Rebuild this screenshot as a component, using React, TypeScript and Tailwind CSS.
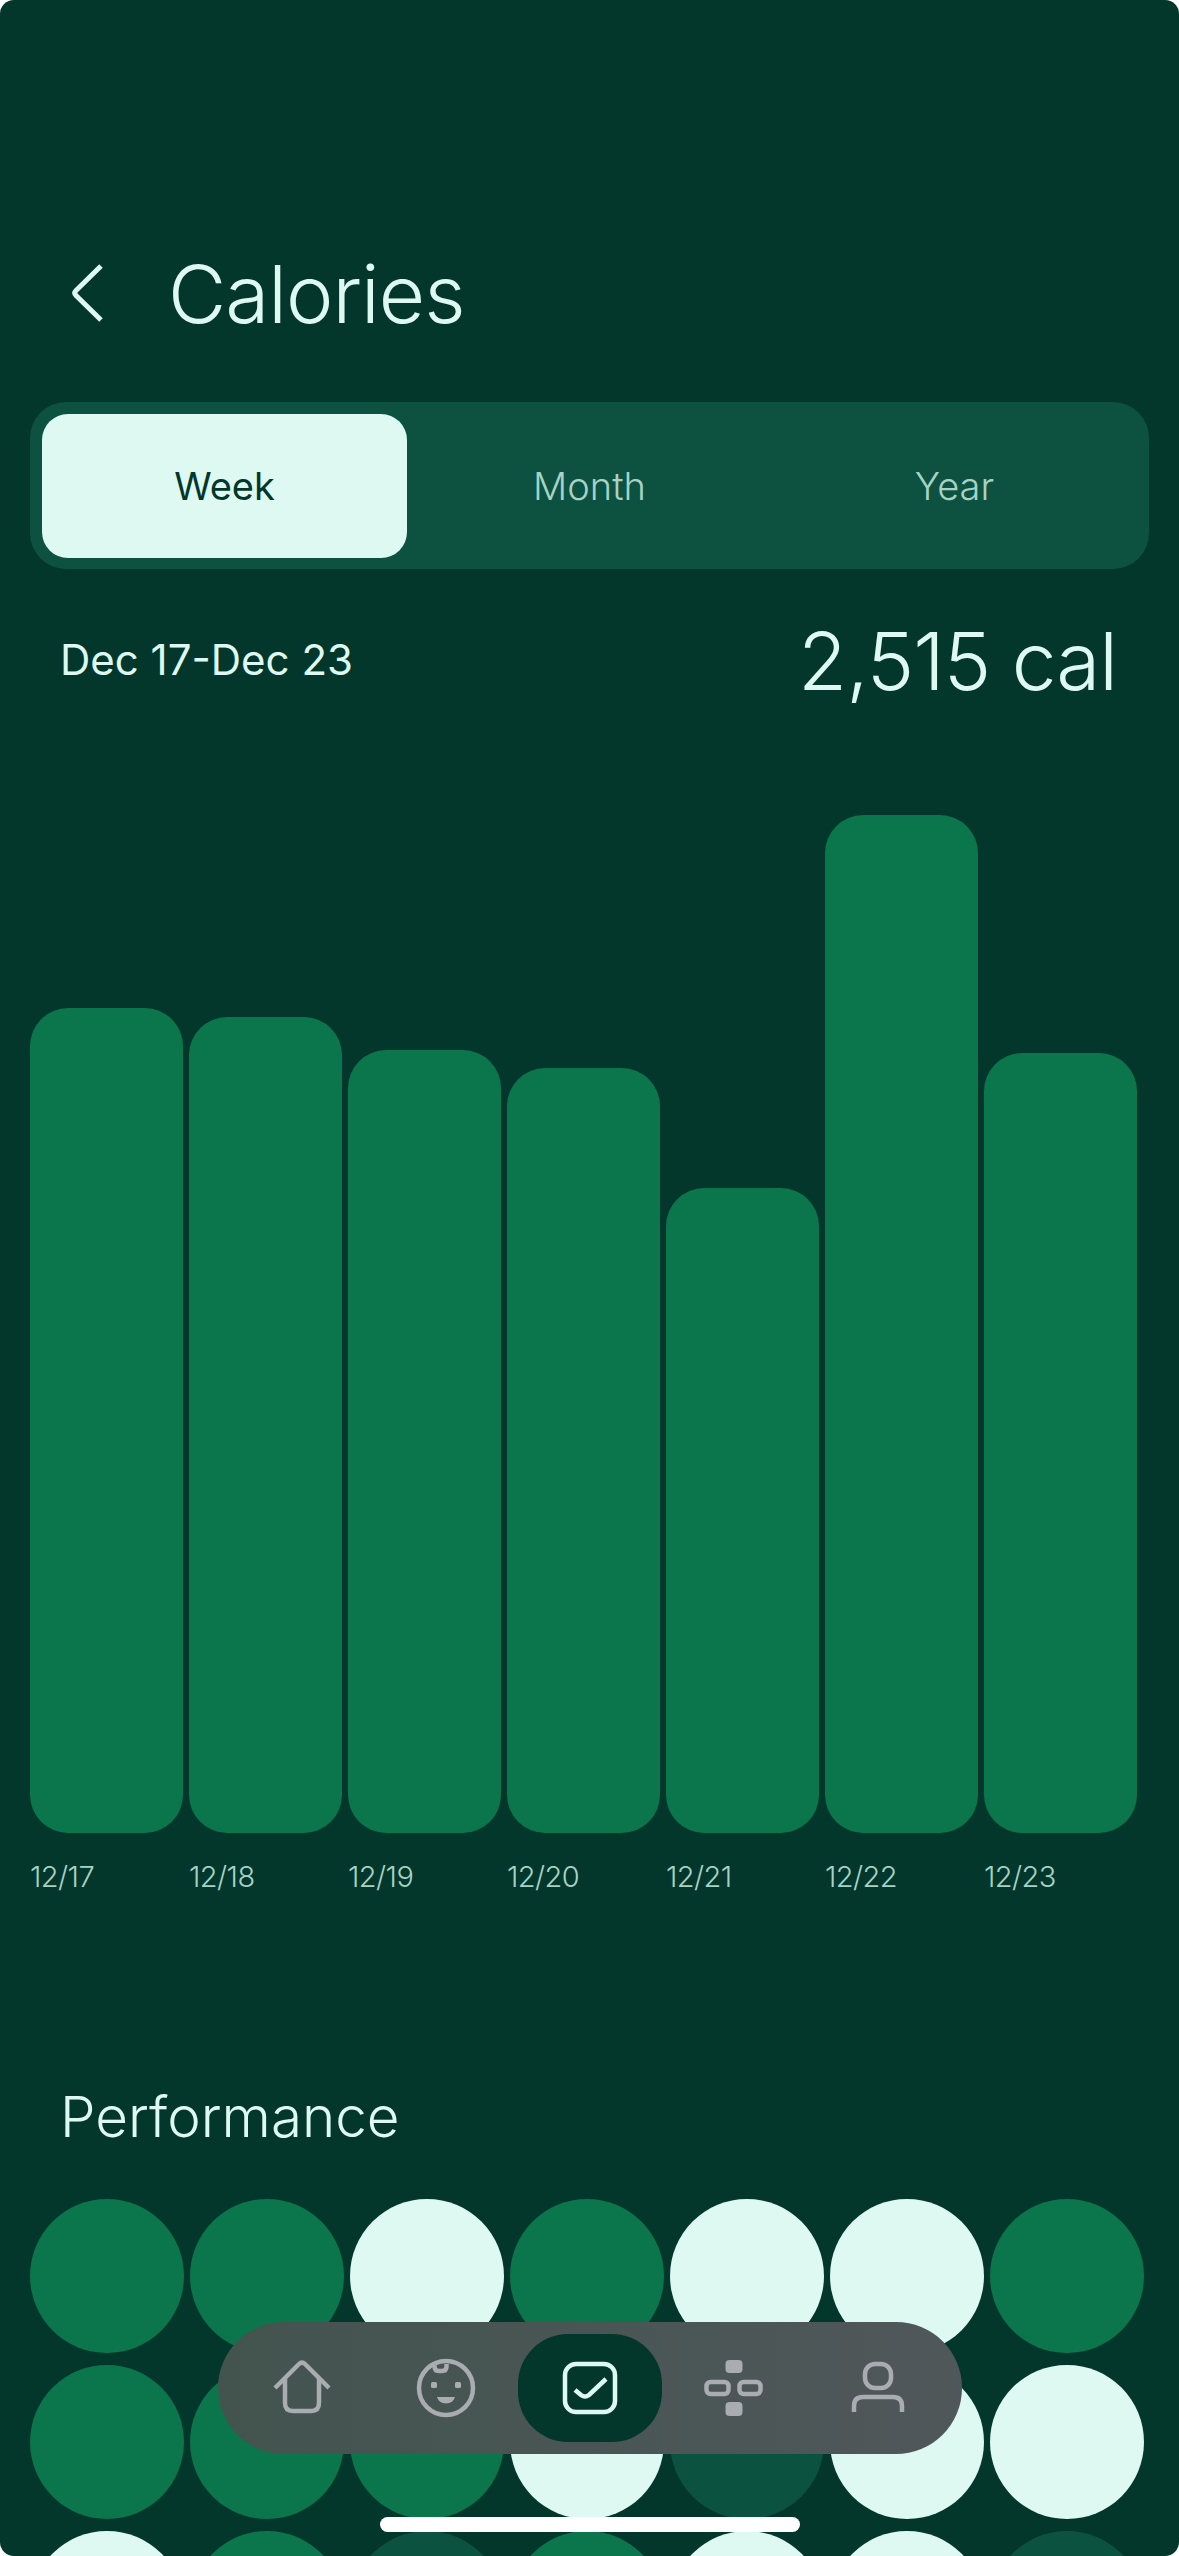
const bars = [
  { day: '12/17', top: 1008 },
  { day: '12/18', top: 1017 },
  { day: '12/19', top: 1050 },
  { day: '12/20', top: 1068 },
  { day: '12/21', top: 1188 },
  { day: '12/22', top: 815 },
  { day: '12/23', top: 1053 },
]

const CHART_BOTTOM = 1833

// 0 = mid green, 1 = pale, 2 = dark green
const dots = [
  0, 0, 1, 0, 1, 1, 0,
  0, 0, 0, 1, 2, 1, 1,
  1, 0, 2, 0, 1, 1, 2,
]
const dotColor = ['bg-[#0B754C]', 'bg-[#DEF8F2]', 'bg-[#0C5240]']

function NavIcon({ children }: { children: React.ReactNode }) {
  return (
    <svg width="64" height="64" viewBox="0 0 64 64" fill="none" stroke="currentColor" strokeWidth="4.5">
      {children}
    </svg>
  )
}

export default function App() {
  return (
    <div className="relative h-[2556px] w-[1179px] overflow-hidden rounded-[14px] bg-[#03372B] font-['Inter',sans-serif] text-[#DEF8F2]">
      {/* header */}
      <div className="flex h-[402px] items-start pt-[249px] pl-[70px]">
        <svg width="34" height="64" viewBox="0 0 34 64" fill="none" stroke="currentColor" strokeWidth="5" className="mt-[12px]">
          <path d="M31 5 L6 29.5 Q3.5 32 6 34.5 L31 59" />
        </svg>
        <h1 className="ml-[64px] text-[80px] leading-[90px] font-light tracking-[-0.012em]">Calories</h1>
      </div>

      {/* range tabs */}
      <div className="mx-[30px] flex h-[167px] w-[1119px] rounded-[36px] bg-[#0D5240] p-3">
        <div className="flex h-[144px] w-[365px] items-center justify-center rounded-[26px] bg-[#DEF8F2] text-[38px] text-[#03372B]">Week</div>
        <div className="flex h-[144px] w-[365px] items-center justify-center text-[38px] font-light text-[#A6D3C5]">Month</div>
        <div className="flex h-[144px] w-[365px] items-center justify-center text-[38px] font-light text-[#A6D3C5]">Year</div>
      </div>

      {/* totals */}
      <div className="flex items-start justify-between pt-[47px] pr-[62px] pl-[60px]">
        <span className="mt-[16px] text-[42px] leading-[56px]">Dec 17-Dec 23</span>
        <span className="text-[80px] leading-[90px] font-light tracking-[-0.012em]">2,515 cal</span>
      </div>

      {/* chart */}
      <div className="mt-[22px] ml-[30px] flex h-[1105px] items-end gap-[6px]">
        {bars.map((b) => (
          <div key={b.day} className="w-[153px] rounded-[38px] bg-[#0B754C]" style={{ height: CHART_BOTTOM - b.top }} />
        ))}
      </div>
      <div className="mt-[26px] ml-[30px] flex gap-[6px]">
        {bars.map((b) => (
          <span key={b.day} className="w-[153px] text-[29px] leading-[36px] font-light tracking-[-0.02em] text-[#A6D3C5]">{b.day}</span>
        ))}
      </div>

      {/* performance */}
      <h2 className="mt-[187px] ml-[60px] text-[56.5px] leading-[70px] font-light">Performance</h2>
      <div className="mt-[47px] ml-[30px] grid grid-cols-[repeat(7,154px)] gap-x-[6px] gap-y-[12px]">
        {dots.map((d, i) => (
          <div key={i} className={`h-[154px] rounded-full ${dotColor[d]}`} />
        ))}
      </div>

      {/* floating nav */}
      <div className="absolute top-[2322px] left-[218px] flex h-[132px] w-[744px] items-center rounded-[66px] bg-linear-to-r from-[#43544F] to-[#50575A] px-3 text-[#A9ACB1]">
        <div className="flex h-[108px] w-[144px] items-center justify-center">
          <NavIcon>
            <path d="M5 32 L29 8 Q32 5 35 8 L59 32" />
            <path d="M15 23 V47 Q15 55 23 55 H41 Q49 55 49 47 V23" />
          </NavIcon>
        </div>
        <div className="flex h-[108px] w-[144px] items-center justify-center">
          <NavIcon>
            <circle cx="32" cy="32" r="27" />
            <path d="M20.5 6 V10.5 Q20.5 15 25 15 H28 Q32.5 15 32.5 10.5 V8" />
            <rect x="17" y="26" width="6" height="6" rx="1.5" fill="currentColor" stroke="none" />
            <rect x="41" y="26" width="6" height="6" rx="1.5" fill="currentColor" stroke="none" />
            <path d="M23 41 H41 Q39 47.5 32 47.5 Q25 47.5 23 41 Z" fill="currentColor" stroke="none" />
          </NavIcon>
        </div>
        <div className="flex h-[108px] w-[144px] items-center justify-center rounded-[50px] bg-[#03372B] text-[#DEF8F2]">
          <NavIcon>
            <rect x="7" y="8" width="50" height="48" rx="11" />
            <path d="M17 34 L23 39 Q27 42 31 39 L48 23" />
          </NavIcon>
        </div>
        <div className="flex h-[108px] w-[144px] items-center justify-center">
          <NavIcon>
            <rect x="23.5" y="4" width="17" height="13" rx="4" fill="currentColor" stroke="none" />
            <rect x="23.5" y="46" width="17" height="14" rx="4" fill="currentColor" stroke="none" />
            <rect x="4.5" y="26" width="22" height="12" rx="4" />
            <rect x="37.5" y="26" width="21" height="12" rx="4" />
          </NavIcon>
        </div>
        <div className="flex h-[108px] w-[144px] items-center justify-center">
          <NavIcon>
            <rect x="19" y="8" width="26" height="24" rx="10" />
            <path d="M8 56 V50 Q8 41 17 41 H47 Q56 41 56 50 V56" />
          </NavIcon>
        </div>
      </div>

      {/* home indicator */}
      <div className="absolute top-[2517px] left-[380px] h-[15px] w-[420px] rounded-full bg-white" />
    </div>
  )
}
